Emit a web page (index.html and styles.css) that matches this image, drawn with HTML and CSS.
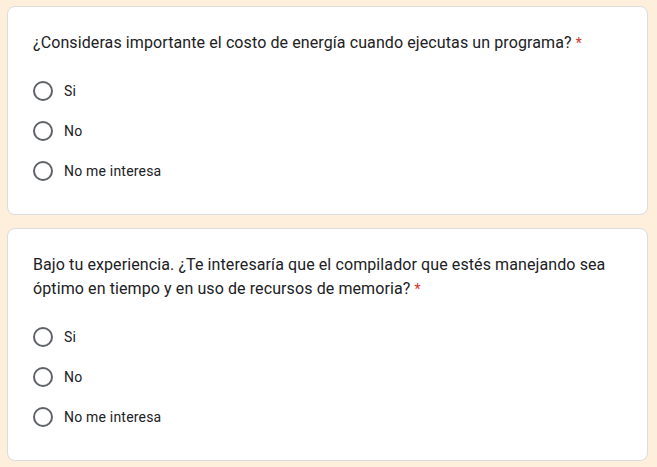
FILE: index.html
```html
<!DOCTYPE html>
<html lang="es">
<head>
<meta charset="utf-8">
<title>Formulario</title>
<link rel="stylesheet" href="styles.css">
</head>
<body>
<main class="page">
  <section class="card">
    <div class="question">¿Consideras importante el costo de energía cuando ejecutas un programa? <span class="req">*</span></div>
    <div class="options">
      <label class="option"><span class="radio"></span><span class="label">Si</span></label>
      <label class="option"><span class="radio"></span><span class="label">No</span></label>
      <label class="option"><span class="radio"></span><span class="label">No me interesa</span></label>
    </div>
  </section>
  <section class="card">
    <div class="question">Bajo tu experiencia. ¿Te interesaría que el compilador que estés manejando sea óptimo en tiempo y en uso de recursos de memoria? <span class="req">*</span></div>
    <div class="options">
      <label class="option"><span class="radio"></span><span class="label">Si</span></label>
      <label class="option"><span class="radio"></span><span class="label">No</span></label>
      <label class="option"><span class="radio"></span><span class="label">No me interesa</span></label>
    </div>
  </section>
</main>
</body>
</html>
```
FILE: styles.css
```css
html, body {
  margin: 0;
  padding: 0;
  background: #fdefdb;
  font-family: Roboto, "Noto Sans", Arial, sans-serif;
  color: #202124;
}
.page {
  display: flex;
  flex-direction: column;
  gap: 13px;
  padding: 6px 9px 0 7px;
}
.card {
  width: 641px;
  box-sizing: border-box;
  background: #fff;
  border: 1px solid #dadce0;
  border-radius: 8px;
  padding: 24px 24px 23px 25px;
}
.question {
  font-size: 16px;
  line-height: 24px;
  letter-spacing: 0.1px;
  font-weight: 400;
}
.req {
  color: #d93025;
  font-size: 14px;
}
.options {
  display: flex;
  flex-direction: column;
  margin-top: 16px;
}
.option {
  display: flex;
  align-items: center;
  height: 40px;
}
.radio {
  width: 20px;
  height: 20px;
  box-sizing: border-box;
  border: 2px solid #5f6368;
  border-radius: 50%;
  flex: none;
}
.label {
  margin-left: 11px;
  font-size: 14px;
  letter-spacing: 0.2px;
  line-height: 20px;
}
```
